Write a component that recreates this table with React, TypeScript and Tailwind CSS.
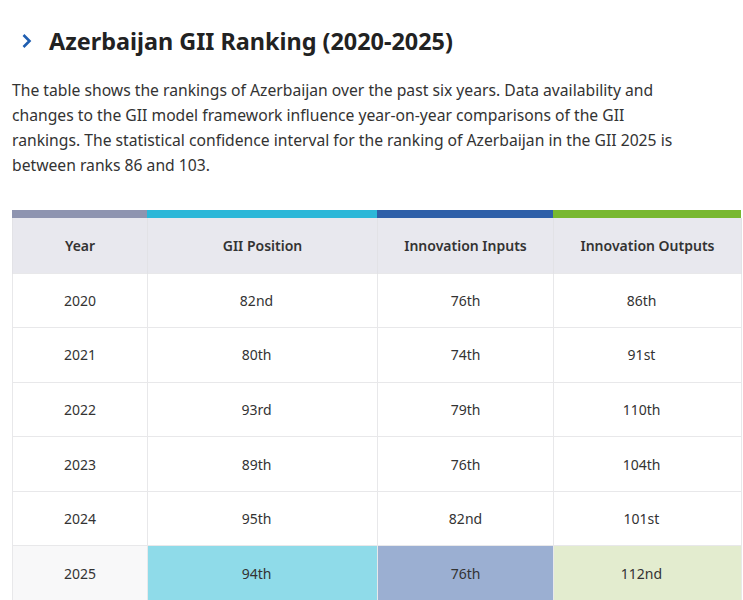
import React from "react";

type Row = {
  year: string;
  gii: string;
  inputs: string;
  outputs: string;
};

const rows: Row[] = [
  { year: "2020", gii: "82nd", inputs: "76th", outputs: "86th" },
  { year: "2021", gii: "80th", inputs: "74th", outputs: "91st" },
  { year: "2022", gii: "93rd", inputs: "79th", outputs: "110th" },
  { year: "2023", gii: "89th", inputs: "76th", outputs: "104th" },
  { year: "2024", gii: "95th", inputs: "82nd", outputs: "101st" },
  { year: "2025", gii: "94th", inputs: "76th", outputs: "112nd" },
];

const App: React.FC = () => {
  return (
    <div
      className="w-[743px] h-[600px] overflow-hidden bg-white text-[#333]"
      style={{ fontFamily: '"Noto Sans", "Open Sans", sans-serif' }}
    >
      <div className="flex items-center gap-[17px] pl-[21px] pt-[25px]">
        <svg width="11" height="16" viewBox="0 0 11 16" className="shrink-0">
          <path d="M2.5 2 L8.5 8 L2.5 14" fill="none" stroke="#1f5eb0" strokeWidth="2.6" />
        </svg>
        <h2 className="text-[23.4px] leading-[32px] font-bold text-[#222]">
          Azerbaijan GII Ranking (2020-2025)
        </h2>
      </div>

      <p className="mt-[21px] ml-[12px] w-[680px] text-[15.7px] leading-[25px] text-[#333]">
        The table shows the rankings of Azerbaijan over the past six years. Data availability and
        changes to the GII model framework influence year-on-year comparisons of the GII
        rankings. The statistical confidence interval for the ranking of Azerbaijan in the GII 2025 is
        between ranks 86 and 103.
      </p>

      <div className="ml-[12px] mt-[32px] w-[729px]">
        <div className="grid grid-cols-[135px_230px_176px_188px] h-[8px]">
          <div className="bg-[#8e94b0]" />
          <div className="bg-[#2bb7d8]" />
          <div className="bg-[#2e5fa8]" />
          <div className="bg-[#78b830]" />
        </div>
        <table className="w-full table-fixed border-collapse text-[14px]">
          <colgroup>
            <col className="w-[135px]" />
            <col className="w-[230px]" />
            <col className="w-[176px]" />
            <col className="w-[188px]" />
          </colgroup>
          <thead>
            <tr className="h-[55px] bg-[#e8e8ee] text-[#333]">
              <th className="font-semibold border-x border-[#e2e2e6]">Year</th>
              <th className="font-semibold border-x border-[#e2e2e6]">GII Position</th>
              <th className="font-semibold border-x border-[#e2e2e6]">Innovation Inputs</th>
              <th className="font-semibold border-x border-[#e2e2e6]">Innovation Outputs</th>
            </tr>
          </thead>
          <tbody>
            {rows.map((r, i) => {
              const last = i === rows.length - 1;
              return (
                <tr key={r.year} className="h-[54.6px] text-center text-[#333]">
                  <td className={`border border-[#e8e8ea] ${last ? "bg-[#f8f8f9]" : "bg-white"}`}>
                    {r.year}
                  </td>
                  <td className={`border border-[#e8e8ea] pr-[12px] ${last ? "bg-[#8fdbe9]" : "bg-white"}`}>
                    {r.gii}
                  </td>
                  <td className={`border border-[#e8e8ea] ${last ? "bg-[#9bafd2]" : "bg-white"}`}>
                    {r.inputs}
                  </td>
                  <td className={`border border-[#e8e8ea] pr-[12px] ${last ? "bg-[#e3eccf]" : "bg-white"}`}>
                    {r.outputs}
                  </td>
                </tr>
              );
            })}
          </tbody>
        </table>
      </div>
    </div>
  );
};

export default App;
